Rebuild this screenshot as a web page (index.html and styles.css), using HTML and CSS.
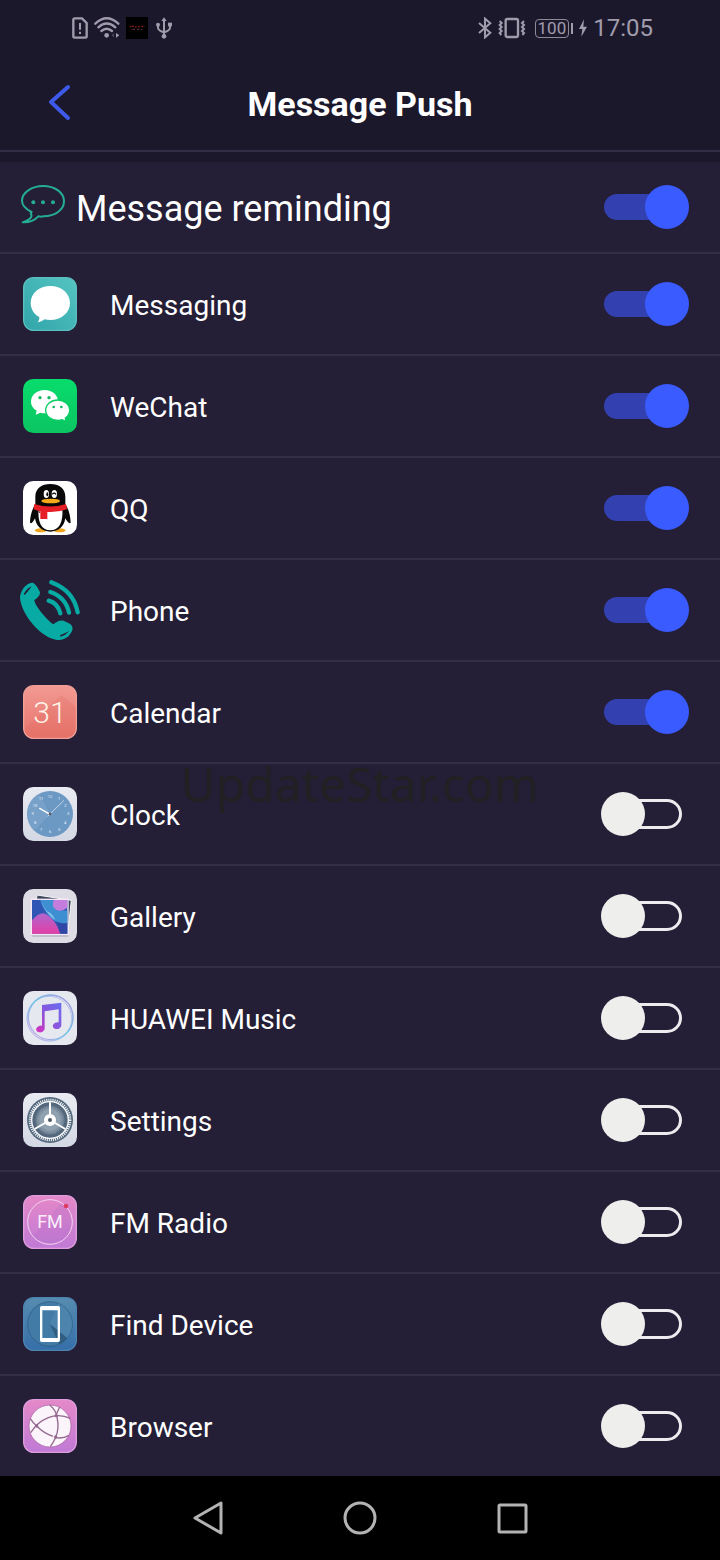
FILE: index.html
```html
<!DOCTYPE html>
<html lang="en">
<head>
<meta charset="utf-8">
<meta name="viewport" content="width=device-width, initial-scale=1">
<title>Message Push</title>
<link rel="stylesheet" href="styles.css">
</head>
<body>
<div class="screen">
  <div class="status-bar">
    <div class="status-group">
      <svg class="status-icon" width="16" height="22" viewBox="0 0 48 66" aria-hidden="true"><path d="M8 4H30L44 18V58Q44 62 40 62H8Q4 62 4 58V8Q4 4 8 4Z" fill="none" stroke="currentColor" stroke-width="7"/><path d="M24 18V38M24 44V51" stroke="currentColor" stroke-width="6"/></svg>
      <svg class="status-icon" width="26" height="22" viewBox="0 0 78 66" aria-hidden="true"><g fill="none" stroke="currentColor" stroke-width="7" stroke-linecap="round"><path d="M4 20Q38 -12 73 20"/><path d="M13 31Q38 8 64 31"/><path d="M22 42Q38 28 54 42"/></g><circle cx="38" cy="55" r="7" fill="currentColor"/><path d="M66 48L76 55L66 62Z" fill="currentColor"/><path d="M60 49L53 55L60 61Z" fill="currentColor" opacity=".4"/></svg>
      <svg width="22" height="22" viewBox="0 0 66 66" aria-hidden="true"><rect width="66" height="66" fill="#000"/><path d="M11 28H24M27 30H32M36 29H43M46 28H55" stroke="#b5212c" stroke-width="3" stroke-dasharray="5 2"/><path d="M19 37H27M33 37H41M45 37H49" stroke="#8b5860" stroke-width="2"/></svg>
      <svg class="status-icon" width="20" height="22" viewBox="0 0 60 66" aria-hidden="true"><path d="M30 8V58M12 24V32Q12 40 30 46M48 24V32Q48 40 30 46" fill="none" stroke="currentColor" stroke-width="6"/><path d="M30 1L38 12H22Z" fill="currentColor"/><circle cx="30" cy="58" r="7" fill="currentColor"/><circle cx="12" cy="23" r="6" fill="currentColor"/><rect x="42" y="17" width="12" height="11" fill="currentColor"/></svg>
    </div>
    <div class="status-group">
      <svg class="status-icon" width="14" height="22" viewBox="0 0 42 66" aria-hidden="true"><path d="M3 18L37 47L21 61V5L37 19L3 48" fill="none" stroke="currentColor" stroke-width="6"/></svg>
      <svg class="status-icon" width="28" height="22" viewBox="0 0 84 66" aria-hidden="true"><rect x="23" y="6" width="37" height="54" rx="5" fill="none" stroke="currentColor" stroke-width="7"/><path d="M5 12L11 18L5 24L11 30L5 36L11 42L5 48L10 54M78 12L72 18L78 24L72 30L78 36L72 42L78 48L73 54" fill="none" stroke="currentColor" stroke-width="6"/></svg>
      <span class="battery">100</span>
      <svg class="status-icon" width="8" height="22" viewBox="0 0 24 66" aria-hidden="true"><path d="M15 7L0 36H10L7 59L24 29H13Z" fill="currentColor"/></svg>
      <time class="status-time">17:05</time>
    </div>
  </div>

  <header class="header">
    <button class="back" type="button" aria-label="Back"><svg width="24" height="38" viewBox="0 0 24 38" aria-hidden="true"><path d="M20 3L3 18L20 34" fill="none" stroke="currentColor" stroke-width="4" stroke-linecap="round" stroke-linejoin="round"/></svg></button>
    <h1 class="title">Message Push</h1>
  </header>

  <main class="list">
    <label class="row row-main">
      <svg width="46" height="46" viewBox="-3 -2 138 138" aria-hidden="true"><g fill="none" stroke="#25ac95" stroke-width="6" stroke-linejoin="round"><path d="M32 82C14 73 3 62 3 48C3 24 32 4 66 4C102 4 129 24 129 50C129 76 102 94 68 95Q60 97 52 95C42 106 30 114 5 113C21 108 38 98 29 86Z"/></g><g fill="#25ac95"><circle cx="37" cy="53" r="6"/><circle cx="66" cy="53" r="6"/><circle cx="96" cy="53" r="6"/></g></svg>
      <span class="name">Message reminding</span>
      <input class="switch" type="checkbox" checked>
    </label>

    <label class="row">
      <span class="icon"><svg width="54" height="54" viewBox="0 0 162 162" aria-hidden="true"><defs><linearGradient id="msg" x1="1" y1="0" x2="0" y2="1"><stop offset="0" stop-color="#55c4c2"/><stop offset="1" stop-color="#31a5aa"/></linearGradient></defs><rect x="2" y="2" width="158" height="158" rx="30" fill="url(#msg)" stroke="#5bbfc0" stroke-width="4"/><path d="M82 27C115 27 141 49 141 78C141 107 115 129 82 129Q72 129 65 127Q56 134 44 136Q50 128 49 120C33 112 23 96 23 78C23 49 49 27 82 27Z" fill="#fff"/></svg></span>
      <span class="name">Messaging</span>
      <input class="switch" type="checkbox" checked>
    </label>

    <label class="row">
      <span class="icon"><svg width="54" height="54" viewBox="0 0 162 162" aria-hidden="true"><defs><linearGradient id="wx" x1="0" y1="0" x2="0" y2="1"><stop offset="0" stop-color="#08dc6c"/><stop offset="1" stop-color="#0bc562"/></linearGradient></defs><rect width="162" height="162" rx="31" fill="url(#wx)"/><path d="M65 33C88 33 105 48 105 68C105 88 88 103 65 103Q58 103 52 101L38 107L41 95C30 88 24 79 24 68C24 48 42 33 65 33Z" fill="#fff"/><path d="M104 63C124 63 140 77 140 94C140 104 135 112 127 117L129 127L117 122Q111 124 104 124C84 124 68 111 68 94C68 77 84 63 104 63Z" fill="#fff" stroke="#0bcd66" stroke-width="4"/><g fill="#12b85f"><circle cx="51" cy="56" r="5"/><circle cx="78" cy="56" r="5"/><circle cx="92" cy="84" r="4"/><circle cx="115" cy="84" r="4"/></g></svg></span>
      <span class="name">WeChat</span>
      <input class="switch" type="checkbox" checked>
    </label>

    <label class="row">
      <span class="icon"><svg width="54" height="54" viewBox="0 0 162 162" aria-hidden="true"><rect width="162" height="162" rx="31" fill="#fff"/><ellipse cx="53" cy="148" rx="18" ry="6" fill="#f2a51c"/><ellipse cx="110" cy="148" rx="18" ry="6" fill="#f2a51c"/><path d="M37 69V48C37 21 56 9 82 9S127 21 127 48V69C136 84 142 100 143 125Q137 131 127 112C124 136 106 152 82 152S39 136 36 112Q27 131 21 125C21 104 28 84 37 69Z" fill="#080808"/><path d="M47 83H118C121 122 109 148 82 148S43 122 47 83Z" fill="#fff"/><path d="M34 69Q82 84 129 69L132 85Q105 95 73 93V114H52V91Q42 89 32 85Z" fill="#e61f27"/><path d="M47 88Q50 92 50 96" stroke="#901319" stroke-width="3" fill="none"/><ellipse cx="70" cy="39" rx="8" ry="12" fill="#fff"/><ellipse cx="94" cy="39" rx="8" ry="12" fill="#fff"/><ellipse cx="73" cy="40" rx="3" ry="6" fill="#080808"/><path d="M88 40Q93 33 99 40" stroke="#080808" stroke-width="4" fill="none"/><ellipse cx="83" cy="60" rx="28" ry="7" fill="#f4aa1b"/></svg></span>
      <span class="name">QQ</span>
      <input class="switch" type="checkbox" checked>
    </label>

    <label class="row">
      <span class="icon"><svg width="60" height="60" viewBox="0 0 180 180" aria-hidden="true"><path d="M36 8Q43 8 53 23L60 37Q61 48 43 60C44 78 83 122 100 133Q115 119 131 122L151 132Q161 140 156 153C147 173 130 181 111 180C66 175 3 106 0 52C2 30 18 10 36 8Z" fill="#08aaa4"/><path d="M11 42Q20 26 35 19Q25 34 14 45ZM122 170Q137 166 148 153Q137 158 120 166Z" fill="#241e36"/><g fill="none" stroke="#08aaa4" stroke-width="13" stroke-linecap="round"><path d="M94 7C138 25 164 50 173 97"/><path d="M91 36C121 46 140 65 147 98"/><path d="M86 62C106 67 116 80 121 100"/></g></svg></span>
      <span class="name">Phone</span>
      <input class="switch" type="checkbox" checked>
    </label>

    <label class="row">
      <span class="icon"><svg width="54" height="54" viewBox="0 0 162 162" aria-hidden="true"><defs><linearGradient id="cal" x1="0" y1="0" x2="0" y2="1"><stop offset="0" stop-color="#f19a92"/><stop offset="1" stop-color="#e8746c"/></linearGradient></defs><rect x="2" y="2" width="158" height="158" rx="30" fill="url(#cal)" stroke="#ef9f96" stroke-width="4"/><path d="M5 130L115 30L158 65V130Q158 158 130 158H30Q5 158 5 130Z" fill="#dd6358" opacity=".2"/><text class="calendar-day" x="81" y="113" text-anchor="middle">31</text></svg></span>
      <span class="name">Calendar</span>
      <input class="switch" type="checkbox" checked>
    </label>

    <label class="row">
      <span class="icon"><svg width="54" height="54" viewBox="0 0 162 162" aria-hidden="true"><defs><linearGradient id="plate" x1="0" y1="0" x2="0" y2="1"><stop offset="0" stop-color="#e9ebf2"/><stop offset="1" stop-color="#d4d8e4"/></linearGradient></defs><rect width="162" height="162" rx="31" fill="url(#plate)"/><circle cx="81" cy="81" r="69" fill="#6c98c4"/><path d="M81 81L49 20A69 69 0 0 0 34 132Z" fill="#83aace" opacity=".5"/><g class="clock-digits" text-anchor="middle"><text x="81" y="33">12</text><text x="108" y="40">1</text><text x="127" y="60">2</text><text x="135" y="85">3</text><text x="126" y="112">4</text><text x="108" y="131">5</text><text x="81" y="138">6</text><text x="54" y="131">7</text><text x="36" y="112">8</text><text x="29" y="85">9</text><text x="36" y="60">10</text><text x="54" y="40">11</text></g><path d="M50 64L81 82" stroke="#fff" stroke-width="4" stroke-linecap="round"/><path d="M74 88L123 40" stroke="#eef4fa" stroke-width="2"/><circle cx="81" cy="81" r="4" fill="#62565f"/></svg></span>
      <span class="name">Clock</span>
      <input class="switch" type="checkbox">
    </label>

    <label class="row">
      <span class="icon"><svg width="54" height="54" viewBox="0 0 162 162" aria-hidden="true"><defs><linearGradient id="pink" x1="0" y1="0" x2="0" y2="1"><stop offset="0" stop-color="#ad68d0"/><stop offset="1" stop-color="#e33fa5"/></linearGradient></defs><rect width="162" height="162" rx="31" fill="#dddbe3"/><path d="M24 137H136V144H28Z" fill="#a7a3b1" opacity=".5"/><path d="M42 18L145 34L134 133L30 117Z" fill="#3e465b" stroke="#f8f8fa" stroke-width="3"/><rect x="25" y="31" width="110" height="105" fill="#2f55b5" stroke="#f5eafa" stroke-width="4"/><path d="M52 33H92Q92 64 133 65V105Q104 103 85 89Q63 67 52 33Z" fill="#3d8fd2"/><path d="M92 33H133V56Q107 76 91 54Q88 44 92 33Z" fill="#c47cdd"/><path d="M27 94Q51 65 69 75Q97 91 112 134H27Z" fill="url(#pink)"/><path d="M52 33Q63 67 96 94Q93 76 71 66Q60 51 52 33Z" fill="#82c4eb"/><path d="M101 98Q117 106 133 102V134H112Z" fill="#3147a5"/></svg></span>
      <span class="name">Gallery</span>
      <input class="switch" type="checkbox">
    </label>

    <label class="row">
      <span class="icon"><svg width="54" height="54" viewBox="0 0 162 162" aria-hidden="true"><defs><linearGradient id="note" x1="1" y1="0" x2="0" y2="1"><stop offset="0" stop-color="#6a6ef0"/><stop offset=".5" stop-color="#8956dc"/><stop offset="1" stop-color="#d82fba"/></linearGradient><linearGradient id="ring" x1="0" y1="1" x2="1" y2="0"><stop offset="0" stop-color="#d5a0e5"/><stop offset=".5" stop-color="#6fc3e7"/><stop offset="1" stop-color="#b295e0"/></linearGradient></defs><rect width="162" height="162" rx="31" fill="#e6e8f0"/><g fill="none" stroke="url(#ring)"><circle cx="83" cy="79" r="67" stroke-width="4"/><circle cx="79" cy="83" r="67" stroke-width="2"/><circle cx="81" cy="81" r="69" stroke-width="2"/></g><path d="M57 42L115 35V104A13 10 -15 1 1 107 94V55L65 61V114A13 10 -15 1 1 57 104Z" fill="url(#note)"/></svg></span>
      <span class="name">HUAWEI Music</span>
      <input class="switch" type="checkbox">
    </label>

    <label class="row">
      <span class="icon"><svg width="54" height="54" viewBox="0 0 162 162" aria-hidden="true"><rect width="162" height="162" rx="31" fill="url(#plate)"/><circle cx="81" cy="81" r="69" fill="#53687c"/><circle cx="81" cy="81" r="59" fill="none" stroke="#f3f6fa" stroke-width="10" stroke-dasharray="1 1" pathLength="120"/><circle cx="81" cy="81" r="55" fill="none" stroke="#f3f6fa" stroke-width="4"/><circle cx="81" cy="81" r="43" fill="#8193a3"/><circle cx="81" cy="81" r="41" fill="none" stroke="#5d7184" stroke-width="6" stroke-dasharray="1 1" pathLength="96"/><circle cx="81" cy="81" r="32" fill="#8fa0af"/><path d="M81 81V28M81 81L35 108M81 81L127 108" stroke="#fff" stroke-width="6"/><circle cx="81" cy="81" r="18" fill="#fff"/><circle cx="81" cy="81" r="6" fill="#4d5965"/></svg></span>
      <span class="name">Settings</span>
      <input class="switch" type="checkbox">
    </label>

    <label class="row">
      <span class="icon"><svg width="54" height="54" viewBox="0 0 162 162" aria-hidden="true"><defs><linearGradient id="orchid" x1="0" y1="0" x2="0" y2="1"><stop offset="0" stop-color="#e588c8"/><stop offset="1" stop-color="#c07ad6"/></linearGradient></defs><rect x="2" y="2" width="158" height="158" rx="30" fill="url(#orchid)" stroke="#df9cdc" stroke-width="4"/><path d="M29 124L112 26A66 66 0 0 1 128 128Q80 165 29 124Z" fill="#aa6bc5" opacity=".2"/><circle cx="81" cy="81" r="67" fill="none" stroke="#f3d5f2" stroke-width="3"/><text class="fm-text" x="81" y="99" text-anchor="middle">FM</text><circle cx="129" cy="33" r="7" fill="#dc3c60"/></svg></span>
      <span class="name">FM Radio</span>
      <input class="switch" type="checkbox">
    </label>

    <label class="row">
      <span class="icon"><svg width="54" height="54" viewBox="0 0 162 162" aria-hidden="true"><defs><linearGradient id="find" x1="0" y1="0" x2="0" y2="1"><stop offset="0" stop-color="#568cb0"/><stop offset="1" stop-color="#366fa9"/></linearGradient></defs><rect x="2" y="2" width="158" height="158" rx="30" fill="url(#find)" stroke="#4d83b0" stroke-width="4"/><circle cx="81" cy="81" r="67" fill="#417ba6" stroke="#2a567d" stroke-width="2"/><path d="M81 81L133 123A67 67 0 0 1 108 142Z" fill="#244967" opacity=".6"/><path d="M81 81L105 19A67 67 0 0 1 133 123Z" fill="#588eb5" opacity=".5"/><path fill-rule="evenodd" d="M56 27H106Q111 27 111 32V130Q111 135 106 135H56Q51 135 51 130V32Q51 27 56 27ZM58 40V123H104V40Z" fill="#fff"/></svg></span>
      <span class="name">Find Device</span>
      <input class="switch" type="checkbox">
    </label>

    <label class="row">
      <span class="icon"><svg width="54" height="54" viewBox="0 0 162 162" aria-hidden="true"><rect x="2" y="2" width="158" height="158" rx="30" fill="url(#orchid)" stroke="#df9cdc" stroke-width="4"/><circle cx="81" cy="81" r="63" fill="#fbf4fb" stroke="#a15f9e" stroke-width="2"/><g fill="none" stroke="#94688f" stroke-width="4"><path d="M80 18Q98 32 102 54Q110 89 97 117Q91 131 82 143"/><path d="M22 59Q30 72 42 82Q62 103 90 112"/><path d="M97 116Q120 120 138 109"/><path d="M23 101Q43 69 76 56Q108 43 142 58"/><path d="M99 48L110 24"/></g><g fill="#94688f"><circle cx="100" cy="50" r="5"/><circle cx="41" cy="81" r="5"/><circle cx="98" cy="114" r="5"/></g></svg></span>
      <span class="name">Browser</span>
      <input class="switch" type="checkbox">
    </label>
  </main>

  <nav class="nav-bar" aria-label="System">
    <button class="nav-button" type="button" aria-label="Back"><svg width="34" height="34" viewBox="0 0 34 34" aria-hidden="true"><path d="M30 2V32L4 17Z" fill="none" stroke="currentColor" stroke-width="3" stroke-linejoin="round"/></svg></button>
    <button class="nav-button" type="button" aria-label="Home"><svg width="34" height="34" viewBox="0 0 34 34" aria-hidden="true"><circle cx="17" cy="17" r="15" fill="none" stroke="currentColor" stroke-width="3"/></svg></button>
    <button class="nav-button" type="button" aria-label="Recent apps"><svg width="34" height="34" viewBox="0 0 34 34" aria-hidden="true"><rect x="4" y="4" width="27" height="27" rx="1" fill="none" stroke="currentColor" stroke-width="3"/></svg></button>
  </nav>

  <div class="watermark">UpdateStar.com</div>
</div>
</body>
</html>
```
FILE: styles.css
```css
* {
  box-sizing: border-box;
}

body {
  margin: 0;
  background: #1c182c;
  color: #fff;
  font-family: Roboto, "Liberation Sans", sans-serif;
}

svg {
  display: block;
  flex: none;
}

button {
  display: block;
  padding: 0;
  border: 0;
  background: none;
  color: inherit;
}

.screen {
  position: relative;
  display: flex;
  flex-direction: column;
  min-height: 100vh;
}

.status-bar {
  display: flex;
  align-items: center;
  justify-content: space-between;
  height: 56px;
  padding: 0 67px 0 72px;
  color: #a09cac;
}

.status-group {
  display: flex;
  align-items: center;
  gap: 6px;
}

.battery {
  position: relative;
  margin: 0 4px 0 3px;
  padding: 0 2px;
  border: 1px solid #8f8a98;
  border-radius: 4px;
  font-size: 17px;
  line-height: 17px;
}

.battery::after {
  content: "";
  position: absolute;
  top: 3px;
  right: -5px;
  width: 2px;
  height: 11px;
  background: #a09cac;
}

.status-time {
  font-size: 24px;
  line-height: 28px;
}

.header {
  display: grid;
  grid-template-columns: 72px 1fr 72px;
  align-items: center;
  height: 96px;
  border-bottom: 2px solid #332e45;
}

.back {
  justify-self: end;
  color: #3d5ae8;
}

.title {
  margin: 0;
  padding-top: 2px;
  font-size: 34px;
  line-height: 40px;
  font-weight: 700;
  text-align: center;
}

.list {
  flex: 1;
  margin-top: 10px;
  background: #241e36;
}

.row {
  display: flex;
  align-items: center;
  gap: 30px;
  height: 102px;
  padding: 0 31px 0 20px;
  border-bottom: 2px solid #332e45;
  font-size: 28px;
  line-height: 34px;
}

.row:last-child {
  height: 100px;
  border-bottom: 0;
}

.row-main {
  gap: 10px;
  height: 92px;
  font-size: 36px;
  line-height: 42px;
}

.icon {
  display: grid;
  place-items: center;
  flex: none;
  width: 60px;
}

.name {
  flex: 1;
  padding-top: 4px;
}

.switch {
  appearance: none;
  position: relative;
  flex: none;
  width: 88px;
  height: 44px;
  margin: 0;
}

.switch::before {
  content: "";
  position: absolute;
  top: 7px;
  left: 12px;
  width: 69px;
  height: 30px;
  box-sizing: border-box;
  border: 3px solid #ececee;
  border-radius: 15px;
}

.switch::after {
  content: "";
  position: absolute;
  top: 0;
  left: 0;
  width: 44px;
  height: 44px;
  border-radius: 50%;
  background: #eeeeec;
}

.switch:checked::before {
  top: 9px;
  left: 3px;
  width: 72px;
  height: 26px;
  border: 0;
  background: #3341b0;
}

.switch:checked::after {
  left: 44px;
  background: #3a5bff;
}

.calendar-day {
  font-size: 90px;
  font-weight: 300;
  fill: #fff3ea;
}

.clock-digits {
  font-size: 12px;
  fill: #eaf2fa;
}

.fm-text {
  font-size: 54px;
  font-weight: 400;
  fill: #fbeefb;
}

.nav-bar {
  display: flex;
  align-items: center;
  justify-content: center;
  gap: 118px;
  height: 84px;
  background: #000;
  color: #b3b3b3;
}

.watermark {
  position: absolute;
  top: 50%;
  left: 0;
  right: 0;
  margin-top: -26px;
  color: #212023;
  font-family: "Noto Sans", sans-serif;
  font-size: 48px;
  line-height: 60px;
  text-align: center;
  pointer-events: none;
}
```
